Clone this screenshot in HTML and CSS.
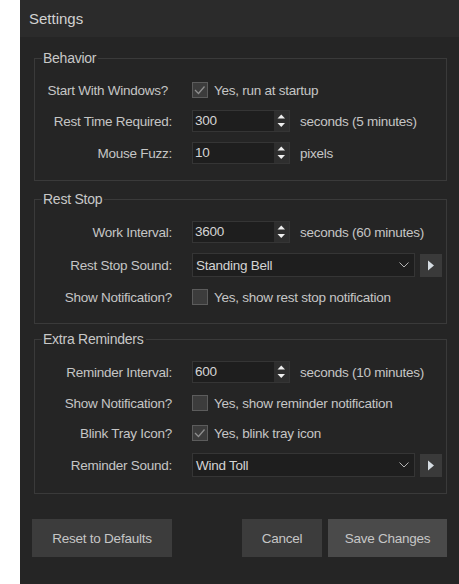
FILE: index.html
```html
<!DOCTYPE html>
<html>
<head>
<meta charset="utf-8">
<title>Settings</title>
<link rel="stylesheet" href="styles.css">
</head>
<body>
<div class="window">
  <div class="titlebar">Settings</div>
  <div class="content">
    <fieldset class="group">
      <legend>Behavior</legend>
      <div class="rows">
        <div class="label label-first">Start With Windows?</div>
        <div class="control check-row">
          <span class="checkbox"><svg width="16" height="16" viewBox="0 0 16 16"><polyline points="3,8 6.5,11.5 12.5,4.5" fill="none" stroke="#8e8e8e" stroke-width="1.3"/></svg></span>
          <span>Yes, run at startup</span>
        </div>

        <div class="label">Rest Time Required:</div>
        <div class="control">
          <div class="spin"><span class="spin-value">300</span><span class="spin-btns"><svg width="15" height="20" viewBox="0 0 15 20"><polygon points="3.5,7.5 11,7.5 7.25,3.5" fill="#f0f0f0"/><polygon points="3.5,12 11,12 7.25,16" fill="#f0f0f0"/></svg></span></div>
          <span class="unit">seconds (5 minutes)</span>
        </div>

        <div class="label">Mouse Fuzz:</div>
        <div class="control">
          <div class="spin"><span class="spin-value">10</span><span class="spin-btns"><svg width="15" height="20" viewBox="0 0 15 20"><polygon points="3.5,7.5 11,7.5 7.25,3.5" fill="#f0f0f0"/><polygon points="3.5,12 11,12 7.25,16" fill="#f0f0f0"/></svg></span></div>
          <span class="unit">pixels</span>
        </div>
      </div>
    </fieldset>

    <fieldset class="group group-rest">
      <legend>Rest Stop</legend>
      <div class="rows">
        <div class="label">Work Interval:</div>
        <div class="control">
          <div class="spin"><span class="spin-value">3600</span><span class="spin-btns"><svg width="15" height="20" viewBox="0 0 15 20"><polygon points="3.5,7.5 11,7.5 7.25,3.5" fill="#f0f0f0"/><polygon points="3.5,12 11,12 7.25,16" fill="#f0f0f0"/></svg></span></div>
          <span class="unit">seconds (60 minutes)</span>
        </div>

        <div class="label">Rest Stop Sound:</div>
        <div class="control">
          <div class="select"><span class="select-value">Standing Bell</span><svg class="chevron" width="10" height="6" viewBox="0 0 10 6"><polyline points="0.5,0.5 5,5 9.5,0.5" fill="none" stroke="#b4b4b4" stroke-width="1"/></svg></div>
          <span class="play"><svg width="8" height="11" viewBox="0 0 8 11"><polygon points="1,0.5 7,5.5 1,10.5" fill="#d6dce2"/></svg></span>
        </div>

        <div class="label">Show Notification?</div>
        <div class="control check-row">
          <span class="checkbox"></span>
          <span>Yes, show rest stop notification</span>
        </div>
      </div>
    </fieldset>

    <fieldset class="group group-extra">
      <legend>Extra Reminders</legend>
      <div class="rows">
        <div class="label">Reminder Interval:</div>
        <div class="control">
          <div class="spin"><span class="spin-value">600</span><span class="spin-btns"><svg width="15" height="20" viewBox="0 0 15 20"><polygon points="3.5,7.5 11,7.5 7.25,3.5" fill="#f0f0f0"/><polygon points="3.5,12 11,12 7.25,16" fill="#f0f0f0"/></svg></span></div>
          <span class="unit">seconds (10 minutes)</span>
        </div>

        <div class="label">Show Notification?</div>
        <div class="control check-row">
          <span class="checkbox"></span>
          <span>Yes, show reminder notification</span>
        </div>

        <div class="label">Blink Tray Icon?</div>
        <div class="control check-row">
          <span class="checkbox"><svg width="16" height="16" viewBox="0 0 16 16"><polyline points="3,8 6.5,11.5 12.5,4.5" fill="none" stroke="#8e8e8e" stroke-width="1.3"/></svg></span>
          <span>Yes, blink tray icon</span>
        </div>

        <div class="label">Reminder Sound:</div>
        <div class="control">
          <div class="select"><span class="select-value">Wind Toll</span><svg class="chevron" width="10" height="6" viewBox="0 0 10 6"><polyline points="0.5,0.5 5,5 9.5,0.5" fill="none" stroke="#b4b4b4" stroke-width="1"/></svg></div>
          <span class="play"><svg width="8" height="11" viewBox="0 0 8 11"><polygon points="1,0.5 7,5.5 1,10.5" fill="#d6dce2"/></svg></span>
        </div>
      </div>
    </fieldset>

    <div class="actions">
      <button class="btn btn-reset">Reset to Defaults</button>
      <span class="spacer"></span>
      <button class="btn btn-cancel">Cancel</button>
      <button class="btn btn-save">Save Changes</button>
    </div>
  </div>
</div>
</body>
</html>
```

FILE: styles.css
```css
html, body {
  margin: 0;
  padding: 0;
  background: #ffffff;
  font-family: "Liberation Sans", Arial, sans-serif;
}

.window {
  margin-left: 20px;
  height: 584px;
  background: #252525;
  color: #c6c6c6;
  font-size: 13.5px;
  letter-spacing: -0.25px;
  overflow: hidden;
}

.titlebar {
  height: 37px;
  line-height: 37px;
  padding-left: 9px;
  font-size: 15px;
  letter-spacing: 0;
  background: #2b2b2b;
  color: #d2d2d2;
}

.content {
  padding: 13px 12px 0 12px;
}

.group {
  margin: 0 0 0 2px;
  padding: 0 0 16px 0;
  border: 1px solid #3a3a3a;
  min-width: 0;
}

.group-rest {
  margin-top: 10px;
}

.group-extra {
  margin-top: 7px;
}

.group legend {
  margin-left: 7px;
  padding: 0 2px 0 1px;
  font-size: 14px;
  line-height: 17px;
  color: #c8c8c8;
}

.rows {
  padding-top: 13px;
  display: grid;
  grid-template-columns: 137px 1fr;
  column-gap: 20px;
  row-gap: 10px;
  align-items: center;
}

.label {
  text-align: right;
  white-space: nowrap;
}

.label-first {
  padding-right: 4px;
}

.control {
  display: flex;
  align-items: center;
  white-space: nowrap;
}

.check-row {
  height: 20px;
  gap: 6px;
}

.checkbox {
  width: 16px;
  height: 16px;
  box-sizing: border-box;
  border: 1px solid #5c5c5c;
  background: #3c3c3c;
  display: flex;
  align-items: center;
  justify-content: center;
}

.checkbox svg {
  display: block;
  flex: none;
}

.spin {
  width: 98px;
  height: 22px;
  box-sizing: border-box;
  border: 1px solid #353535;
  background: #1e1e1e;
  display: flex;
  align-items: stretch;
}

.spin-value {
  flex: 1;
  padding-left: 2px;
  line-height: 20px;
  color: #d4d4d4;
}

.spin-btns {
  width: 15px;
  background: #2e2e2e;
}

.spin-btns svg {
  display: block;
}

.unit {
  margin-left: 10px;
}

.select {
  width: 223px;
  height: 24px;
  box-sizing: border-box;
  border: 1px solid #353535;
  background: #1e1e1e;
  display: flex;
  align-items: center;
}

.select-value {
  flex: 1;
  padding-left: 3px;
  color: #d4d4d4;
}

.chevron {
  display: block;
  margin-right: 5px;
}

.play {
  margin-left: 5px;
  width: 22px;
  height: 23px;
  background: #3a3a3a;
  display: flex;
  align-items: center;
  justify-content: center;
}

.play svg {
  display: block;
}

.actions {
  display: flex;
  margin-top: 25px;
}

.spacer {
  flex: 1;
}

.btn {
  height: 38px;
  border: none;
  padding: 0;
  background: #3c3c3c;
  color: #c6c6c6;
  font-family: "Liberation Sans", Arial, sans-serif;
  font-size: 13.5px;
  letter-spacing: -0.25px;
}

.btn-reset {
  width: 140px;
}

.btn-cancel {
  width: 80px;
  margin-right: 6px;
}

.btn-save {
  width: 119px;
  background: #4a4a4a;
}
```
